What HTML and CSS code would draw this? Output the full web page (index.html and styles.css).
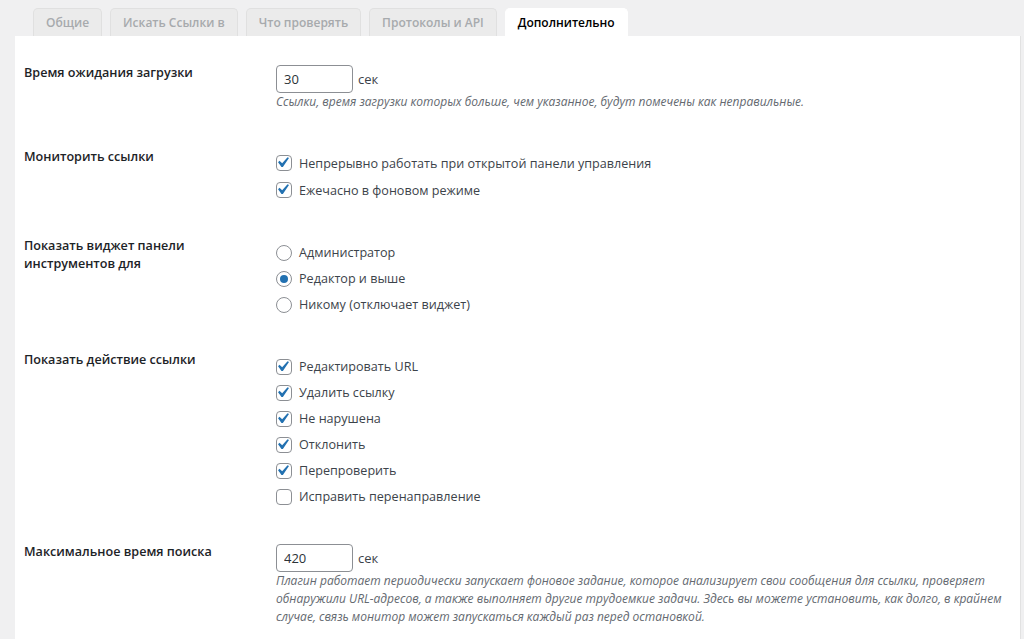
FILE: index.html
```html
<!DOCTYPE html>
<html lang="ru">
<head>
<meta charset="utf-8">
<title>Дополнительно</title>
<link rel="stylesheet" href="styles.css">
</head>
<body>
<div class="wrap">
  <nav class="tabs">
    <a class="tab">Общие</a>
    <a class="tab">Искать Ссылки в</a>
    <a class="tab">Что проверять</a>
    <a class="tab">Протоколы и API</a>
    <a class="tab active">Дополнительно</a>
  </nav>
  <div class="panel">
    <div class="row">
      <div class="label">Время ожидания загрузки</div>
      <div class="field">
        <div class="inline"><input class="num" type="text" value="30"><span>сек</span></div>
        <p class="desc">Ссылки, время загрузки которых больше, чем указанное, будут помечены как неправильные.</p>
      </div>
    </div>

    <div class="row">
      <div class="label">Мониторить ссылки</div>
      <div class="field options loose">
        <label class="opt"><svg class="box" viewBox="0 0 16 16"><rect x=".5" y=".5" width="15" height="15" rx="3.5"/><path transform="translate(-4 -3) scale(1.05)" d="M14.83 4.89l1.34.94-5.81 8.38H9.02L5.78 9.67l1.34-1.25 2.57 2.4z"/></svg>Непрерывно работать при открытой панели управления</label>
        <label class="opt"><svg class="box" viewBox="0 0 16 16"><rect x=".5" y=".5" width="15" height="15" rx="3.5"/><path transform="translate(-4 -3) scale(1.05)" d="M14.83 4.89l1.34.94-5.81 8.38H9.02L5.78 9.67l1.34-1.25 2.57 2.4z"/></svg>Ежечасно в фоновом режиме</label>
      </div>
    </div>

    <div class="row">
      <div class="label">Показать виджет панели<br>инструментов для</div>
      <div class="field options">
        <label class="opt"><svg class="box" viewBox="0 0 16 16"><circle cx="8" cy="8" r="7.5"/></svg>Администратор</label>
        <label class="opt"><svg class="box" viewBox="0 0 16 16"><circle cx="8" cy="8" r="7.5"/><circle class="dot" cx="8" cy="8" r="4"/></svg>Редактор и выше</label>
        <label class="opt"><svg class="box" viewBox="0 0 16 16"><circle cx="8" cy="8" r="7.5"/></svg>Никому (отключает виджет)</label>
      </div>
    </div>

    <div class="row">
      <div class="label">Показать действие ссылки</div>
      <div class="field options">
        <label class="opt"><svg class="box" viewBox="0 0 16 16"><rect x=".5" y=".5" width="15" height="15" rx="3.5"/><path transform="translate(-4 -3) scale(1.05)" d="M14.83 4.89l1.34.94-5.81 8.38H9.02L5.78 9.67l1.34-1.25 2.57 2.4z"/></svg>Редактировать URL</label>
        <label class="opt"><svg class="box" viewBox="0 0 16 16"><rect x=".5" y=".5" width="15" height="15" rx="3.5"/><path transform="translate(-4 -3) scale(1.05)" d="M14.83 4.89l1.34.94-5.81 8.38H9.02L5.78 9.67l1.34-1.25 2.57 2.4z"/></svg>Удалить ссылку</label>
        <label class="opt"><svg class="box" viewBox="0 0 16 16"><rect x=".5" y=".5" width="15" height="15" rx="3.5"/><path transform="translate(-4 -3) scale(1.05)" d="M14.83 4.89l1.34.94-5.81 8.38H9.02L5.78 9.67l1.34-1.25 2.57 2.4z"/></svg>Не нарушена</label>
        <label class="opt"><svg class="box" viewBox="0 0 16 16"><rect x=".5" y=".5" width="15" height="15" rx="3.5"/><path transform="translate(-4 -3) scale(1.05)" d="M14.83 4.89l1.34.94-5.81 8.38H9.02L5.78 9.67l1.34-1.25 2.57 2.4z"/></svg>Отклонить</label>
        <label class="opt"><svg class="box" viewBox="0 0 16 16"><rect x=".5" y=".5" width="15" height="15" rx="3.5"/><path transform="translate(-4 -3) scale(1.05)" d="M14.83 4.89l1.34.94-5.81 8.38H9.02L5.78 9.67l1.34-1.25 2.57 2.4z"/></svg>Перепроверить</label>
        <label class="opt"><svg class="box" viewBox="0 0 16 16"><rect x=".5" y=".5" width="15" height="15" rx="3.5"/></svg>Исправить перенаправление</label>
      </div>
    </div>

    <div class="row">
      <div class="label">Максимальное время поиска</div>
      <div class="field">
        <div class="inline"><input class="num" type="text" value="420"><span>сек</span></div>
        <p class="desc">Плагин работает периодически запускает фоновое задание, которое анализирует свои сообщения для ссылки, проверяет<br>обнаружили URL-адресов, а также выполняет другие трудоемкие задачи. Здесь вы можете установить, как долго, в крайнем<br>случае, связь монитор может запускаться каждый раз перед остановкой.</p>
      </div>
    </div>
  </div>
</div>
</body>
</html>
```

FILE: styles.css
```css
html, body {
  margin: 0;
  height: 100%;
}
body {
  background: #f0f0f1;
  font-family: "Open Sans", "Noto Sans", sans-serif;
  overflow: hidden;
}
.wrap {
  padding: 8px 0 0 15px;
}
.tabs {
  display: flex;
  gap: 8px;
  padding-left: 18px;
  height: 28px;
}
.tab {
  display: flex;
  align-items: center;
  padding: 0 12px;
  background: #ebebeb;
  border: 1px solid #e0e0e0;
  border-bottom: none;
  border-radius: 5px 5px 0 0;
  color: #a7aaad;
  font-size: 12px;
  font-weight: 600;
  white-space: nowrap;
}
.tab.active {
  background: #fff;
  border-color: #fff;
  color: #000;
}
.panel {
  width: 1006px;
  min-height: 620px;
  background: #fff;
  border-right: 1px solid #e2e2e2;
  padding: 11px 0 0 9px;
  box-sizing: border-box;
}
.row {
  display: grid;
  grid-template-columns: 252px 1fr;
  padding: 16.5px 0;
}
.label {
  font-size: 12.6px;
  font-weight: 600;
  line-height: 18px;
  color: #1d2327;
}
.field {
  font-size: 12.6px;
  color: #3c434a;
}
.inline {
  display: flex;
  align-items: center;
  gap: 5px;
  margin-top: 1px;
  font-size: 13px;
}
.num {
  box-sizing: border-box;
  width: 77px;
  height: 28px;
  margin: 0;
  padding: 0 7px;
  border: 1px solid #8c8f94;
  border-radius: 4px;
  font-family: inherit;
  font-size: 13px;
  color: #2c3338;
  background: #fff;
}
.desc {
  margin: 0 0 4px;
  font-size: 12px;
  font-style: italic;
  line-height: 18px;
  color: #646970;
}
.options {
  margin-top: 3px;
}
.opt {
  display: flex;
  align-items: center;
  gap: 7px;
  height: 26px;
}
.loose {
  margin-top: 2px;
}
.loose .opt {
  height: 27px;
}
.box {
  width: 16px;
  height: 16px;
  flex: none;
}
.box rect, .box circle {
  fill: #fff;
  stroke: #8c8f94;
  stroke-width: 1;
}
.box path {
  fill: #2271b1;
}
.box circle.dot {
  fill: #2271b1;
  stroke: none;
}
```
